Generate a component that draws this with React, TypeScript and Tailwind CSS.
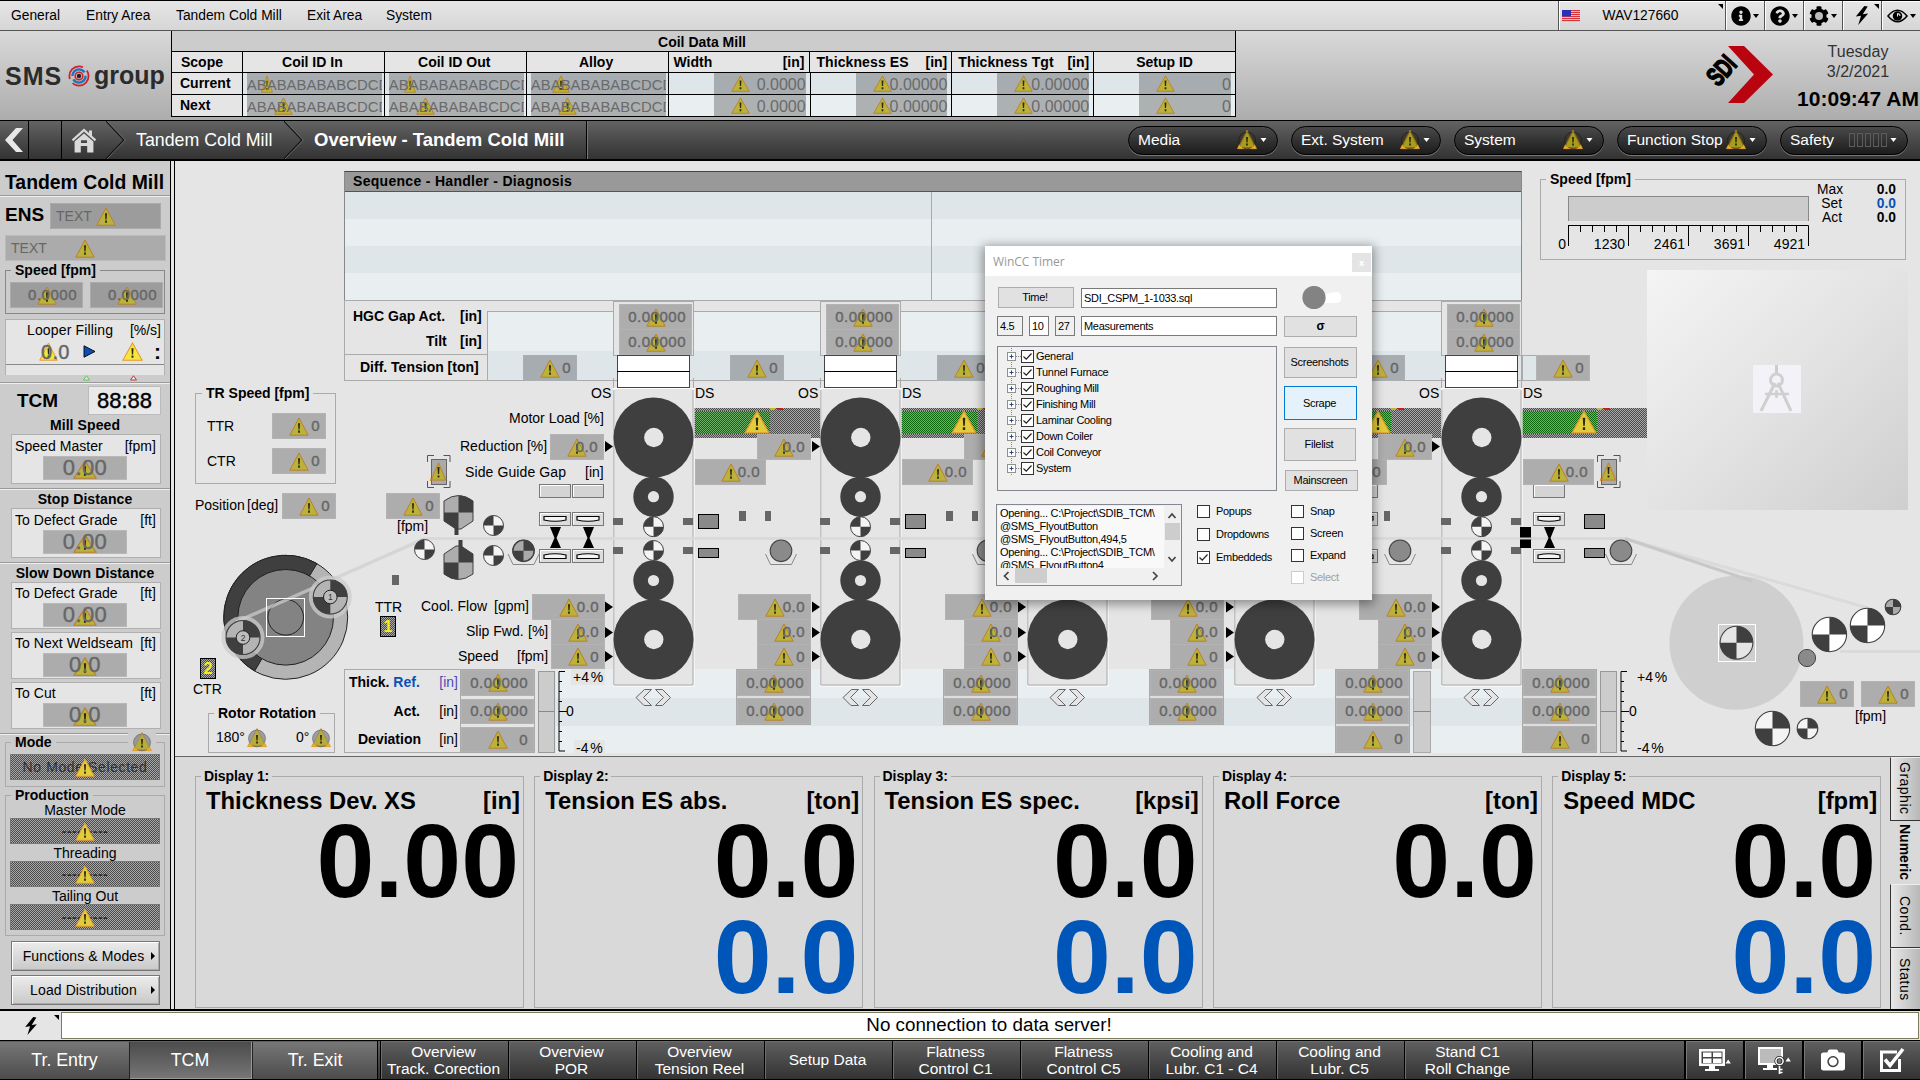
import React from "react";
import { FaInfoCircle, FaQuestionCircle, FaCog, FaCamera } from "react-icons/fa";

/* ---------- small drawing pieces ---------- */

function Warn({ className = "h-[19px] w-[20px]", tone = "dim" }: { className?: string; tone?: "dim" | "bright" | "gold" }) {
  const fill = tone === "dim" ? "#bcb23a" : tone === "bright" ? "#f7e640" : "#e3cc3c";
  const stroke = tone === "dim" ? "#b9802f" : "#e39a2c";
  return (
    <svg viewBox="0 0 20 19" preserveAspectRatio="none" className={`block shrink-0 ${className}`}>
      <path d="M10 1 L19.2 18.2 H0.8 Z" fill={fill} stroke={stroke} strokeWidth="1" />
      <path d="M9 6.2h2l-.4 6.2h-1.2zM9.1 13.6h1.8v2.2H9.1z" fill="#2c2a10" />
    </svg>
  );
}

function WarnRound({ dark = false }: { dark?: boolean }) {
  return (
    <svg viewBox="0 0 20 20" className="block h-[20px] w-[20px] shrink-0">
      <path d="M10 0.5 L19.4 18.6 H0.6 Z" fill="#f2b51d" stroke="#e39a2c" />
      <circle cx="10" cy="10.4" r="8.4" fill={dark ? "#3a3a20" : "#8c8c8c"} opacity={dark ? 0.55 : 0.8} stroke={dark ? "#111" : "#666"} />
      <path d="M10 2 L17.6 17 H2.4 Z" fill={dark ? "#a89c1c" : "#b7ad36"} />
      <path d="M9 7h2l-.4 5.4h-1.2zM9.1 13.6h1.8v2H9.1z" fill="#2c2a10" />
    </svg>
  );
}

function Field({
  className = "",
  value,
  tone = "plain",
}: {
  className?: string;
  value: string;
  tone?: "plain" | "blue" | "dark";
}) {
  const bg =
    tone === "blue" ? "bg-[#a7acb0] border-[#a9afb3]" : tone === "dark" ? "bg-[#9c9c9c] border-[#acacac]" : "bg-[#adadad] border-[#b3b3b3]";
  return (
    <div className={`flex items-center justify-center border ${bg} ${className}`}>
      <div className="relative flex h-full w-full items-center justify-end pb-px pr-[5px]">
        <div className="absolute inset-0 flex items-center justify-center">
          <Warn />
        </div>
        <span className="relative text-[15px] leading-none tracking-[0.5px] text-[#666] [-webkit-text-stroke:0.4px_#666]">{value}</span>
      </div>
    </div>
  );
}

const dither = "bg-[repeating-conic-gradient(#4c4c4c_0_25%,#a8a8a8_0_50%)] bg-[length:2px_2px]";

/* ---------- header ---------- */

function Caret({ className = "" }: { className?: string }) {
  return (
    <svg viewBox="0 0 6 4" className={`h-[4px] w-[6px] ${className}`}>
      <path d="M0 0h6L3 4z" fill="currentColor" />
    </svg>
  );
}

function Corner() {
  return (
    <svg viewBox="0 0 5 5" className="absolute right-[2px] top-[3px] h-[5px] w-[5px]">
      <path d="M0 0h5v5z" fill="#000" />
    </svg>
  );
}

function MenuBar() {
  const cell = "relative flex h-full items-center justify-center border-l border-[#555] shadow-[inset_1px_1px_0_#fff]";
  return (
    <div className="flex h-[31px] border-b border-t border-b-[#555] border-t-black bg-linear-to-b from-[#e6e6e6] to-[#d6d6d6] text-[13.8px]">
      <div className="flex flex-1 items-center pl-[11px] pt-px">
        <span className="w-[75px]">General</span>
        <span className="w-[90px]">Entry Area</span>
        <span className="w-[131px]">Tandem Cold Mill</span>
        <span className="w-[79px]">Exit Area</span>
        <span>System</span>
      </div>
      <div className={`${cell} w-[167px] pr-[3px]`}>
        <svg viewBox="0 0 18 12" className="absolute left-[3px] top-[9px] h-[12px] w-[18px]">
          <rect width="18" height="12" fill="#f3c9cb" />
          {[0, 2, 4, 6, 8, 10].map((y) => (
            <rect key={y} y={y} width="18" height="1.1" fill="#d8343c" />
          ))}
          <rect width="9" height="6.4" fill="#2a2fb8" />
        </svg>
        <span className="pt-px">WAV127660</span>
        <Corner />
      </div>
      <div className={`${cell} w-[39px] gap-[2px]`}>
        <FaInfoCircle className="size-[20px]" />
        <Caret />
      </div>
      <div className={`${cell} w-[39px] gap-[2px]`}>
        <FaQuestionCircle className="size-[20px]" />
        <Caret />
      </div>
      <div className={`${cell} w-[39px] gap-[2px]`}>
        <span className="relative">
          <FaCog className="size-[20px]" />
          <span className="absolute left-[6px] top-[6px] size-[8px] rounded-full bg-[#bbb]" />
        </span>
        <Caret />
      </div>
      <div className={`${cell} w-[39px]`}>
        <svg viewBox="0 0 14 20" className="h-[19px] w-[14px]">
          <path d="M9.5 0 L0.5 11 L6 10.2 L3 20 L13.5 8 L7.8 8.8 L13 0.5 Z" fill="#000" />
        </svg>
        <Corner />
      </div>
      <div className={`${cell} w-[39px] gap-[2px]`}>
        <svg viewBox="0 0 22 14" className="h-[14px] w-[21px]">
          <path d="M1 7 Q11 -5 21 7 Q11 19 1 7Z" fill="none" stroke="#000" strokeWidth="1.6" />
          <circle cx="11" cy="7" r="5" fill="#000" />
          <path d="M11 4v3.5M11 4.5a2.6 2.6 0 0 1 2.6 2.6" stroke="#e0e0e0" strokeWidth="1.1" fill="none" />
        </svg>
        <Caret />
      </div>
    </div>
  );
}

const headCell = "flex items-center border-l border-black bg-[#e5e5e5] font-bold";

function CoilText({ tri, w, blue }: { tri: string; w: string; blue: boolean }) {
  return (
    <div className={`h-full w-[142px] border-l border-black pl-[4px] pr-[2px] ${blue ? "bg-[#dfe6e9]" : "bg-[#e9eef0]"}`}>
      <div className={`relative h-full overflow-hidden ${blue ? "bg-[#a7acb0]" : "bg-[#aeb1b2]"}`}>
        <div className={`absolute top-[2px] ${tri}`}>
          <Warn className={`h-[18px] ${w}`} />
        </div>
        <span className="relative text-[14.9px] leading-[21px] text-[#6a6a6a]">ABABABABABCDCD</span>
      </div>
    </div>
  );
}

function CoilNum({ value, blue, tri }: { value: string; blue: boolean; tri: string }) {
  return (
    <div className={`h-full w-[142px] border-l border-black pl-[45px] pr-[4px] ${blue ? "bg-[#dfe6e9]" : "bg-[#e9eef0]"}`}>
      <div className={`relative h-full text-right ${blue ? "bg-[#a7acb0]" : "bg-[#aeb1b2]"}`}>
        <div className={`absolute top-[2px] ${tri}`}>
          <Warn className="h-[17px] w-[19px]" />
        </div>
        <span className="relative text-[16px] leading-[21px] text-[#6a6a6a]">{value}</span>
      </div>
    </div>
  );
}

function CoilRow({ name, blue }: { name: string; blue: boolean }) {
  return (
    <div className="flex h-[22px] border-b border-black">
      <div className="flex w-[70px] items-center bg-[#e5e5e5] pl-[8px] text-[14px] font-bold">{name}</div>
      <CoilText blue={blue} tri={blue ? "left-[14px]" : "left-[27px]"} w={blue ? "w-[12px]" : "w-[19px]"} />
      <CoilText blue={blue} tri={blue ? "left-[15px]" : "left-[27px]"} w={blue ? "w-[12px]" : "w-[19px]"} />
      <CoilText blue={blue} tri={blue ? "left-[21px]" : "left-[27px]"} w={blue ? "w-[18px]" : "w-[19px]"} />
      <CoilNum blue={blue} value="0.0000" tri="left-[17px]" />
      <CoilNum blue={blue} value="0.00000" tri="left-[17px]" />
      <CoilNum blue={blue} value="0.00000" tri="left-[17px]" />
      <CoilNum blue={blue} value="0" tri="left-[17px]" />
    </div>
  );
}

function Header() {
  return (
    <div className="flex h-[89px] bg-linear-to-b from-[#d9d9d9] to-[#adadad]">
      <div className="flex w-[171px] items-center pl-[5px]">
        <span className="mt-px w-[60px] text-[25px] leading-none font-bold tracking-[1px] text-[#2b2b2b]">SMS</span>
        <svg viewBox="0 0 22 22" className="ml-[3px] h-[22px] w-[22px]">
          <circle cx="11" cy="11" r="9.6" fill="none" stroke="#d0202c" strokeWidth="1.8" strokeDasharray="22 5" />
          <circle cx="11" cy="11" r="6.6" fill="none" stroke="#1b76bd" strokeWidth="2.4" strokeDasharray="17 3.5" />
          <circle cx="11" cy="11" r="3.8" fill="none" stroke="#d0202c" strokeWidth="1.6" />
          <circle cx="11" cy="11" r="2.2" fill="#222" />
        </svg>
        <span className="ml-[4px] text-[25px] leading-none font-bold text-[#2b2b2b]">group</span>
      </div>
      <div className="flex h-[86px] w-[1065px] flex-col border-l border-r border-black bg-[#cccccc]">
        <div className="h-[22px] border-b border-black pt-[2px] pr-[3px] text-center text-[14px] leading-[18px] font-bold">Coil Data Mill</div>
        <div className="flex h-[21px] border-b border-black text-[14px]">
          <div className="flex w-[70px] items-center bg-[#e5e5e5] pl-[9px] font-bold">Scope</div>
          <div className={`${headCell} w-[142px] justify-center pr-[2px]`}>Coil ID In</div>
          <div className={`${headCell} w-[142px] justify-center pr-[2px]`}>Coil ID Out</div>
          <div className={`${headCell} w-[142px] justify-center pr-[2px]`}>Alloy</div>
          <div className={`${headCell} w-[142px] justify-between px-[5px]`}>
            <span>Width</span>
            <span>[in]</span>
          </div>
          <div className={`${headCell} w-[142px] justify-between pl-[6px] pr-[4px]`}>
            <span className="tracking-[0.1px]">Thickness ES</span>
            <span>[in]</span>
          </div>
          <div className={`${headCell} w-[142px] justify-between pl-[6px] pr-[4px]`}>
            <span className="tracking-[0.1px]">Thickness Tgt</span>
            <span>[in]</span>
          </div>
          <div className={`${headCell} w-[142px] justify-center`}>Setup ID</div>
        </div>
        <CoilRow name="Current" blue />
        <CoilRow name="Next" blue={false} />
      </div>
      <div className="flex flex-1 justify-end">
        <svg viewBox="0 0 74 64" className="mr-[22px] mt-[12px] h-[64px] w-[74px]">
          <path d="M28 3 H44 L73 31.5 L44 60 H28 L54 31.5 Z" fill="#b9040f" />
          <text
            x="0"
            y="10.500"
            textAnchor="middle"
            transform="translate(21 27) rotate(-48) scale(0.62 0.92)"
            fontFamily="Liberation Sans, sans-serif"
            fontWeight="700"
            fontSize="29"
            stroke="#000"
            strokeWidth="1.6"
          >
            SDI
          </text>
        </svg>
        <div className="flex w-[124px] flex-col items-center text-[#333]">
          <span className="mt-[11px] text-[16px] leading-[20px]">Tuesday</span>
          <span className="text-[16px] leading-[20px]">3/2/2021</span>
          <span className="mt-[4px] text-[21px] leading-[26px] font-bold whitespace-nowrap text-black">10:09:47 AM</span>
        </div>
      </div>
    </div>
  );
}

function Pill({ label, icon, w }: { label: string; icon: React.ReactNode; w: string }) {
  return (
    <div
      className={`flex h-[29px] items-center rounded-full border border-black bg-linear-to-b from-[#4a4a4a] to-[#1c1c1c] pl-[9px] pr-[10px] text-[15.5px] text-white shadow-[0_1px_0_#777] ${w}`}
    >
      <span className="flex-1 whitespace-nowrap">{label}</span>
      {icon}
      <Caret className="ml-[3px] !h-[4px] !w-[7px]" />
    </div>
  );
}

function Breadcrumb() {
  return (
    <div className="flex h-[41px] items-center border-b-2 border-t border-black bg-linear-to-b from-[#636363] to-[#333] text-white">
      <div className="flex h-full w-[29px] items-center border-r border-black pl-[4px]">
        <svg viewBox="0 0 19 24" className="h-[24px] w-[19px]">
          <path d="M12 0h7L8.5 12 19 24h-7L1 12z" fill="#e8e8e8" />
        </svg>
      </div>
      <div className="h-full w-[33px] border-r border-black" />
      <svg viewBox="0 0 26 25" className="ml-[9px] h-[25px] w-[26px]">
        <path d="M13 0.5 L0.8 11.5 L2.2 13.2 L13 3.6 L23.8 13.2 L25.2 11.5 L21 7.8V2.5H18v2.6z" fill="#d9d9d9" />
        <path d="M13 5.4 L3.6 13.6V24.5h6.2v-6.4h6.4v6.4h6.2V13.6zM10 12.2h6v2.8h-6z" fill="#d9d9d9" fillRule="evenodd" />
      </svg>
      <svg viewBox="0 0 20 38" className="ml-[9px] h-[38px] w-[20px]">
        <path d="M0 0 L18 19 L0 38" fill="none" stroke="#111" strokeWidth="1.5" />
        <path d="M1 0 L19.2 19 L1 38" fill="none" stroke="#888" strokeWidth="0.7" />
      </svg>
      <span className="ml-[10px] w-[148px] text-[17.8px] whitespace-nowrap">Tandem Cold Mill</span>
      <svg viewBox="0 0 20 38" className="h-[38px] w-[20px]">
        <path d="M0 0 L18 19 L0 38" fill="none" stroke="#111" strokeWidth="1.5" />
        <path d="M1 0 L19.2 19 L1 38" fill="none" stroke="#888" strokeWidth="0.7" />
      </svg>
      <span className="ml-[10px] w-[272px] text-[18.500px] font-bold whitespace-nowrap">Overview - Tandem Cold Mill</span>
      <div className="h-full w-px bg-black shadow-[1px_0_0_#777]" />
      <div className="ml-auto flex gap-[13px] pr-[12px]">
        <Pill label="Media" w="w-[150px]" icon={<WarnRound dark />} />
        <Pill label="Ext. System" w="w-[150px]" icon={<WarnRound dark />} />
        <Pill label="System" w="w-[150px]" icon={<WarnRound dark />} />
        <Pill label="Function Stop" w="w-[150px]" icon={<WarnRound dark />} />
        <Pill
          label="Safety"
          w="w-[128px]"
          icon={
            <div className="flex gap-[2px]">
              {[0, 1, 2, 3, 4].map((i) => (
                <span key={i} className="h-[14px] w-[6px] border border-[#5c5c5c]" />
              ))}
            </div>
          }
        />
      </div>
    </div>
  );
}

/* ---------- left panel ---------- */

function Rule() {
  return <div className="h-[2px] shrink-0 border-t border-[#999] bg-[#f0f0f0]" />;
}

function Readout({ label, unit, value, tall = false }: { label: string; unit: string; value: string; tall?: boolean }) {
  return (
    <div className={`ml-[11px] w-[150px] shrink-0 border border-[#b0b0b0] bg-[#e5e5e5] ${tall ? "h-[50px] pt-px" : "h-[47px]"}`}>
      <div className="flex h-[20px] items-center justify-between pl-[3px] pr-[4px] text-[14px] tracking-[0.05px]">
        <span>{label}</span>
        <span>{unit}</span>
      </div>
      <div className="relative ml-[31px] flex h-[24px] w-[84px] items-center justify-center border border-[#b8b8b8] bg-[#acacac]">
        <div className="absolute inset-0 flex items-end justify-center">
          <Warn className="h-[19px] w-[24px]" />
        </div>
        <span className="relative text-[22px] leading-none tracking-[0.4px] text-[#666] [-webkit-text-stroke:0.4px_#666]">{value}</span>
      </div>
    </div>
  );
}

function DitherField({ text, bold = false }: { text: string; bold?: boolean }) {
  return (
    <div className={`relative ml-[4px] flex h-[26px] w-[150px] items-center justify-center border border-[#777] ${dither}`}>
      <span className={`text-[14px] text-[#2f2f2f] ${bold ? "tracking-[0.6px]" : "font-bold tracking-[0.5px]"}`}>{text}</span>
      <div className="absolute inset-0 flex items-center justify-center">
        <Warn tone="gold" />
      </div>
    </div>
  );
}

function SideButton({ children, className }: { children: string; className: string }) {
  return (
    <button
      className={`ml-[11px] flex h-[30px] w-[149px] shrink-0 items-center border border-[#777] bg-linear-to-b from-[#ececec] to-[#c9c9c9] text-[14px] tracking-[0.1px] shadow-[inset_1px_1px_0_#fff,inset_-1px_-1px_0_#aaa] ${className}`}
    >
      <span className="flex-1 text-center whitespace-nowrap">{children}</span>
      <svg viewBox="0 0 4 8" className="mr-[4px] h-[8px] w-[4px]">
        <path d="M0 0l4 4-4 4z" />
      </svg>
    </button>
  );
}

function Sidebar() {
  return (
    <div className="flex w-[175px] shrink-0 border-r border-black bg-[#e5e5e5]">
      <div className="flex w-[171px] flex-col border-r border-black bg-[#cccccc]">
        <div className="flex h-[34px] shrink-0 items-center justify-center pt-[9px] pr-[1px] text-[19.4px] font-bold whitespace-nowrap">
          Tandem Cold Mill
        </div>
        <Rule />
        <div className="mt-[6px] flex h-[26px] shrink-0 items-center pl-[5px]">
          <span className="w-[45px] pb-[3px] text-[19px] leading-none font-bold">ENS</span>
          <div className="relative flex h-[26px] w-[111px] items-center border border-[#aaa] bg-[#9c9c9c] pl-[5px] text-[14px] text-[#666]">
            TEXT
            <div className="absolute inset-0 flex items-center justify-center">
              <Warn />
            </div>
          </div>
        </div>
        <div className="relative ml-[5px] mt-[6px] flex h-[26px] w-[161px] shrink-0 items-center border border-[#bbb] bg-[#ababab] pl-[5px] text-[14px] text-[#666]">
          TEXT
          <div className="absolute inset-0 flex items-center justify-center pr-px">
            <Warn />
          </div>
        </div>
        <fieldset className="ml-[5px] mt-px h-[52px] w-[160px] shrink-0 border border-[#888]">
          <legend className="ml-[5px] px-[4px] text-[14px] leading-[16px] font-bold">Speed [fpm]</legend>
          <div className="mt-[4px] flex gap-[7px] pl-[4px]">
            <Field tone="dark" value="0.0000" className="h-[26px] w-[73px]" />
            <Field tone="dark" value="0.0000" className="h-[26px] w-[73px]" />
          </div>
        </fieldset>
        <div className="ml-[5px] mt-[5px] h-[56px] w-[160px] shrink-0 border border-b-0 border-[#b0b0b0] bg-[#e5e5e5]">
          <div className="flex h-[21px] items-center justify-between pl-[21px] pr-[3px] text-[14px]">
            <span className="tracking-[0.15px]">Looper Filling</span>
            <span>[%/s]</span>
          </div>
          <div className="flex h-[24px] items-center border-b border-[#888] pb-[2px]">
            <div className="relative ml-[33px] flex h-[20px] w-[34px] items-center">
              <Warn tone="bright" className="absolute left-0 h-[19px] w-[19px]" />
              <span className="relative ml-[2px] text-[20px] leading-none tracking-[0.3px] text-[#666] [-webkit-text-stroke:0.4px_#666]">0.0</span>
            </div>
            <svg viewBox="0 0 13 13" className="ml-[10px] h-[13px] w-[13px]">
              <path d="M1 0.8 L12 6.5 L1 12.2Z" fill="#0a50b4" stroke="#000" strokeWidth="0.9" />
            </svg>
            <Warn tone="bright" className="ml-[26px] h-[19px] w-[21px]" />
            <span className="ml-[11px] text-[21px] leading-none font-bold">:</span>
          </div>
        </div>
        <div className="flex h-[7px] shrink-0 pl-[83px]">
          <svg viewBox="0 0 54 6" className="h-[6px] w-[54px]">
            <path d="M0.5 5 L3.5 0.8 L6.5 5Z" fill="#e8e8e8" stroke="#5fc552" />
            <path d="M47.5 5 L50.5 0.8 L53.5 5Z" fill="#e8e8e8" stroke="#d23030" />
          </svg>
        </div>
        <Rule />
        <div className="mt-[2px] flex h-[29px] shrink-0 items-center pl-[17px]">
          <span className="w-[71px] text-[19px] leading-none font-bold">TCM</span>
          <div className="flex h-[29px] w-[73px] items-center justify-center border border-[#bbb] bg-[#e9e9e9] text-[22px] leading-none [-webkit-text-stroke:0.4px_#000]">
            88:88
          </div>
        </div>
        <div className="mt-[2px] h-[17px] shrink-0 pt-px text-center text-[14px] leading-[15px] font-bold tracking-[0.1px]">Mill Speed</div>
        <Readout label="Speed Master" unit="[fpm]" value="0.00" tall />
        <div className="h-[4px] shrink-0" />
        <Rule />
        <div className="h-[18px] shrink-0 pt-[2px] text-center text-[14px] leading-[14px] font-bold tracking-[0.1px]">Stop Distance</div>
        <Readout label="To Defect Grade" unit="[ft]" value="0.00" tall />
        <div className="h-[4px] shrink-0" />
        <Rule />
        <div className="h-[18px] shrink-0 pt-[2px] text-center text-[14px] leading-[14px] font-bold tracking-[0.1px]">Slow Down Distance</div>
        <Readout label="To Defect Grade" unit="[ft]" value="0.00" />
        <div className="h-[3px] shrink-0" />
        <Readout label="To Next Weldseam" unit="[ft]" value="0.0" />
        <div className="h-[3px] shrink-0" />
        <Readout label="To Cut" unit="[ft]" value="0.0" />
        <div className="h-[4px] shrink-0" />
        <Rule />
        <fieldset className="relative -mt-px ml-[5px] h-[53px] w-[160px] shrink-0 border border-[#aaa]">
          <legend className="ml-[5px] px-[4px] text-[14px] leading-[16px] font-bold">Mode</legend>
          <div className="absolute -top-[18px] right-[8px] bg-[#ccc] px-[4px]">
            <WarnRound />
          </div>
          <div className="mt-[4px]">
            <DitherField text="No Mode Selected" bold />
          </div>
        </fieldset>
        <fieldset className="ml-[5px] h-[149px] w-[160px] shrink-0 border border-[#aaa] text-center text-[14px]">
          <legend className="ml-[5px] px-[4px] text-left leading-[16px] font-bold">Production</legend>
          <div className="h-[15px] leading-[14px]">Master Mode</div>
          <DitherField text="---------" />
          <div className="h-[17px] leading-[18px]">Threading</div>
          <DitherField text="---------" />
          <div className="h-[17px] leading-[18px]">Tailing Out</div>
          <DitherField text="---------" />
        </fieldset>
        <SideButton className="mt-[5px] pl-[4px]">{"Functions & Modes"}</SideButton>
        <SideButton className="mt-[4px] pl-[4px]">Load Distribution</SideButton>
      </div>
    </div>
  );
}

/* ---------- process picture ---------- */

function Roll({ cx, cy, r, light = "#fff", dark = "#3f3f3f" }: { cx: number; cy: number; r: number; light?: string; dark?: string }) {
  return (
    <g>
      <circle cx={cx} cy={cy} r={r} fill={light} />
      <path d={`M${cx} ${cy}V${cy - r}A${r} ${r} 0 0 1 ${cx + r} ${cy}ZM${cx} ${cy}V${cy + r}A${r} ${r} 0 0 1 ${cx - r} ${cy}Z`} fill={dark} />
      <circle cx={cx} cy={cy} r={r} fill="none" stroke="#3f3f3f" strokeWidth="1.1" />
    </g>
  );
}

function WorkRoll({ cx, cy }: { cx: number; cy: number }) {
  const r = 10;
  return (
    <g>
      <circle cx={cx} cy={cy} r={r} fill="#f4f4f4" />
      <path d={`M${cx} ${cy}V${cy - r}A${r} ${r} 0 0 0 ${cx - r} ${cy}ZM${cx} ${cy}V${cy + r}A${r} ${r} 0 0 0 ${cx + r} ${cy}Z`} fill="#3f3f3f" />
      <circle cx={cx} cy={cy} r={r} fill="none" stroke="#3f3f3f" strokeWidth="1" />
    </g>
  );
}

function StandDrawing({ x }: { x: number }) {
  return (
    <g transform={`translate(${x} 0)`}>
      <rect x="0.5" y="301.5" width="80" height="54" fill="#e5e5e5" stroke="#aaa" />
      <rect x="4.5" y="355.5" width="72" height="32" fill="#fff" stroke="#444" />
      <path d="M4 371.5h73" stroke="#000" />
      <path d="M0.5 378v11M80.5 378v11" stroke="#aaa" />
      <rect x="0.5" y="388.5" width="80.5" height="297.5" fill="#e5e5e5" stroke="#fff" />
      <path d="M80 390v295H0.8V390" fill="none" stroke="#aaa" />
      {[437.5, 639.5].map((cy) => (
        <g key={cy}>
          <circle cx="40.5" cy={cy} r="40" fill="#3f3f3f" />
          <circle cx="40.8" cy={cy} r="9.7" fill="#e5e5e5" />
        </g>
      ))}
      {[496.7, 580.5].map((cy) => (
        <g key={cy}>
          <circle cx="40.5" cy={cy} r="20.2" fill="#3f3f3f" />
          <circle cx="40.5" cy={cy} r="5.6" fill="#e5e5e5" />
        </g>
      ))}
      <WorkRoll cx={40.5} cy={526.7} />
      <WorkRoll cx={40.5} cy={550.5} />
      <path d="M0 518h10v7H0zM0 547h10v7H0zM70 518h10v7H70zM70 547h10v7H70z" fill="#666" />
      <g fill="#e5e5e5" stroke="#666" strokeWidth="1">
        <path d="M38.5 689.5h-7L23 697.5l8 8h7.500l-8-8z" />
        <path d="M42.500 689.5h7l8 8-8 8h-7l8-8z" />
      </g>
    </g>
  );
}

function Looper({ cx, fill = "#8a8a8a" }: { cx: number; fill?: string }) {
  return (
    <g>
      <path d={`M${cx - 15.5} 554l5 10.500h21l5-10.500`} fill="none" stroke="#888" />
      <circle cx={cx} cy="550.800" r="10.800" fill={fill} stroke="#444" strokeWidth="1.100" />
    </g>
  );
}

function GuideButtons({ x }: { x: number }) {
  return (
    <g transform={`translate(${x} 0)`}>
      {[484.5, 512.5, 549.5].map((y, i) => (
        <g key={y}>
          <rect x="0.500" y={y} width="31" height="13" fill={i === 0 ? "#d4d4d4" : "#dcdcdc"} stroke="#777" />
          <path d={`M1.500 ${y + 12}V${y + 1}H30.500`} fill="none" stroke="#fff" />
          {i === 1 && <path d={`M5 ${y + 4}h22v3.500q-11 2.500-22 0z`} fill="#f4f4f4" stroke="#000" strokeWidth="1.200" />}
          {i === 2 && <path d={`M5 ${y + 9}h22v-3.500q-11-2.500-22 0z`} fill="#f4f4f4" stroke="#000" strokeWidth="1.200" />}
        </g>
      ))}
      <path d="M11 527h11l-4.500 11 4.500 10H11l4.500-10z" fill="#000" />
    </g>
  );
}

function GapDrawing({ x }: { x: number }) {
  return (
    <g transform={`translate(${x} 0)`}>
      <rect x="85.500" y="514.500" width="20" height="14" fill="#8a8a8a" stroke="#000" />
      <rect x="85.500" y="548.500" width="20" height="9" fill="#8a8a8a" stroke="#000" />
      <path d="M126 511h7v10h-7zM152 511h6v10h-6z" fill="#666" />
      <Looper cx={168} />
    </g>
  );
}

function Bracket({ x }: { x: number }) {
  return (
    <g transform={`translate(${x} 455)`}>
      <path d="M0.500 7V0.500H7M16.500 0.500H23V7M23 26v6.500H16.500M7 32.500H0.500V26" fill="none" stroke="#555" />
      <path d="M11.500 7L20 25.500H3Z" fill="#f2b51d" stroke="#e39a2c" />
      <rect x="4.500" y="4.500" width="15" height="25" fill="#a0a0a0" fillOpacity="0.85" stroke="#666" />
      <path d="M11.500 8L18.500 25H4.500Z" fill="#bcb23a" stroke="#c0862f" />
      <path d="M10.500 12h2l-.4 7h-1.200zM10.600 20.500h1.800v2h-1.800z" fill="#222" />
    </g>
  );
}

function Drawing() {
  const stands = [613, 820, 1027, 1234, 1441];
  return (
    <svg viewBox="175 161 1745 596" className="absolute left-[175px] top-[161px] h-[596px] w-[1745px]">
      {/* payoff rotor */}
      <circle cx="285.700" cy="617.300" r="62" fill="#b4b4b4" stroke="#222" />
      <path d="M317 563.600A62 62 0 1 0 254.700 671L262 658.500A47.500 47.500 0 0 1 309.500 576Z" fill="#3f3f3f" stroke="#222" />
      <circle cx="285.700" cy="617.300" r="47.800" fill="#838383" stroke="#222" />
      <circle cx="285.700" cy="617.300" r="17.800" fill="#838383" stroke="#222" />
      <path d="M236 622 L425 538.500" stroke="#cfcfcf" strokeOpacity="0.7" strokeWidth="3.500" />
      <rect x="266.500" y="598.500" width="38" height="38" fill="none" stroke="#fff" />
      {[
        [330.3, 597, "1"],
        [243, 637.5, "2"],
      ].map(([cx, cy, n]) => (
        <g key={n}>
          <circle cx={cx} cy={cy} r="19.500" fill="none" stroke="#ccc" strokeOpacity="0.75" strokeWidth="4" />
          <Roll cx={cx as number} cy={cy as number} r={17} light="#b4b4b4" />
          <circle cx={cx} cy={cy} r="6.800" fill="#bdbdbd" stroke="#222" />
          <text x={cx} y={(cy as number) + 3} textAnchor="middle" fontSize="8.500" fill="#333">
            {n}
          </text>
        </g>
      ))}
      {/* strip */}
      <path d="M424 538.500H1626" stroke="#d9d9d9" strokeWidth="3" />
      {/* entry rolls */}
      <g>
        <path d="M444 501q14.500-11 29 0v20l-12 8h-5l-12-8z" fill="#adadad" />
        <path d="M458.500 495.500q8 0 14.500 5.500v11.500h-14.500zM458.500 512.500H444V521l10.500 7v7h4z" fill="#3f3f3f" />
        <path d="M444 501q14.500-11 29 0v20l-12 8h-5l-12-8z" fill="none" stroke="#3f3f3f" />
        <path d="M444 554l12-8h5l12 8v20q-14.500 11-29 0z" fill="#adadad" />
        <path d="M458.500 546v-6h4v7L473 554v8.500h-14.500zM458.500 562.500H444V574q6.500 5.500 14.500 5.500z" fill="#3f3f3f" />
        <path d="M444 554l12-8h5l12 8v20q-14.500 11-29 0z" fill="none" stroke="#3f3f3f" />
      </g>
      <WorkRoll cx={493.5} cy={525.5} />
      <WorkRoll cx={424.5} cy={549.5} />
      <WorkRoll cx={493.5} cy={555.5} />
      <Looper cx={523.5} fill="#a9a9a9" />
      <Roll cx={523.5} cy={550.8} r={10.5} light="#a9a9a9" />
      <rect x="392" y="575" width="7" height="10" fill="#666" />
      <Bracket x={427} />
      <GuideButtons x={539} />
      <GuideButtons x={572} />
      {stands.map((x) => (
        <StandDrawing key={x} x={x} />
      ))}
      <path d="M613 538.500H1526" stroke="#dadada" strokeWidth="2.600" />
      <GapDrawing x={613} />
      <GapDrawing x={820} />
      <GapDrawing x={1027} />
      <GapDrawing x={1232} />
      <GuideButtons x={1346} />
      {/* exit side of the last stand */}
      <GuideButtons x={1533} />
      <rect x="1584.500" y="514.500" width="20" height="14" fill="#8a8a8a" stroke="#000" />
      <rect x="1584.500" y="548.500" width="20" height="9" fill="#8a8a8a" stroke="#000" />
      <Looper cx={1621} />
      <Bracket x={1597} />
      <rect x="1520" y="527" width="11" height="21" fill="#000" />
      <path d="M1520 538.500h12" stroke="#ccc" strokeWidth="2" />
      {/* delivery side */}
      <path d="M1625 538.500L1868 608" stroke="#dadada" strokeWidth="3" />
      <path d="M1840 651.500H1920" stroke="#dadada" strokeWidth="3" />
      <circle cx="1736.400" cy="642.700" r="67" fill="#cfcfcf" />
      <path d="M1625 538.500L1752 581" stroke="#c8c8c8" strokeWidth="3" />
      <rect x="1718.500" y="624.500" width="37" height="37" fill="none" stroke="#fff" />
      <Roll cx={1736.5} cy={642.7} r={16.4} light="#e5e5e5" />
      <Roll cx={1829.4} cy={634.5} r={17.2} />
      <Roll cx={1867.5} cy={625.5} r={17.2} />
      <Roll cx={1893} cy={607} r={7.8} light="#aaa" />
      <circle cx="1807" cy="658" r="8.600" fill="#8a8a8a" stroke="#444" />
      <Roll cx={1772.5} cy={728.5} r={17.2} light="#f4f4f4" />
      <Roll cx={1807.5} cy={728.5} r={10.3} light="#f4f4f4" />
      {/* speed scale */}
      <path d="M1568.500 246V225.500H1808.500V246M1628.500 225v21M1688.500 225v21M1748.500 225v21" fill="none" stroke="#000" />
      {Array.from({ length: 20 }, (_, i) => (
        <path key={i} d={`M${1568.5 + i * 12} 225v7`} stroke="#000" />
      ))}
      {/* deviation bars and scales */}
      {[538, 1600].map((x) => (
        <g key={x} transform={`translate(${x} 0)`}>
          <rect x="0.500" y="671.500" width="16" height="81" fill="#ccc" stroke="#999" />
          <path d="M0.500 711.500h16" stroke="#888" />
          <path d="M27 671.500h-6v79.500h6M21 711.500h8" fill="none" stroke="#000" />
          {[1, 2, 3, 5, 6, 7].map((i) => (
            <path key={i} d={`M21 ${671.5 + i * 10}h3`} stroke="#000" />
          ))}
        </g>
      ))}
      <g>
        <rect x="1413.500" y="671.500" width="17" height="81" fill="#ccc" stroke="#aaa" />
        <path d="M1413.500 711.500h17" stroke="#888" />
      </g>
      {/* flow arrows */}
      {[605, 812, 1018, 1226, 1432].map((x) => (
        <path
          key={x}
          d={`M${x} 441l8 5.500-8 5.500zM${x} 601.500l8 5.500-8 5.500zM${x} 627l8 5.500-8 5.500zM${x} 651l8 5.500-8 5.500z`}
          fill="#000"
        />
      ))}
    </svg>
  );
}

function LoadBar({ className }: { className: string }) {
  return (
    <div className={`absolute top-[408px] h-[30px] w-[131px] ${dither} ${className}`}>
      <div className="ml-[6px] mt-[3px] h-[23px] w-[75px] bg-[repeating-conic-gradient(#0f6a0f_0_25%,#6fb069_0_50%)] bg-[length:2px_2px]" />
      <div className="absolute left-[81px] top-0 h-[2px] w-[5px] bg-[#c8b820]" />
      <div className="absolute left-[88px] top-0 h-[2px] w-[6px] bg-[#c02020]" />
      <div className="absolute left-[55px] top-[2px]">
        <Warn tone="gold" className="h-[24px] w-[26px]" />
      </div>
    </div>
  );
}

const gaps = [
  { id: 1, pos: "left-[613px]", rows: 2, out: true },
  { id: 2, pos: "left-[820px]", rows: 2, out: true },
  { id: 3, pos: "left-[1026px]", rows: 2, out: true },
  { id: 4, pos: "left-[1234px]", rows: 3, out: true },
  { id: 5, pos: "left-[1441px]", rows: 3, out: false },
];

function GapFields() {
  return (
    <>
      {gaps.map((g) => (
        <div key={g.id} className={`absolute top-0 ${g.pos}`}>
          <Field value="0.00000" className="absolute left-[6px] top-[304px] h-[26px] w-[73px]" />
          <Field value="0.00000" className="absolute left-[6px] top-[329px] h-[26px] w-[73px]" />
          <Field tone={g.out ? "blue" : "plain"} value="0" className={`absolute top-[355px] h-[26px] w-[54px] ${g.out ? "left-[117px]" : "left-[95px]"}`} />
          <span className="absolute left-[82px] top-[385px] text-[14px] leading-[16px]">DS</span>
          <span className="absolute -left-[22px] top-[385px] text-[14px] leading-[16px]">OS</span>
          <div className="absolute left-[82px] top-0">
            <Field value="0.0" className="absolute left-0 top-[459px] h-[26px] w-[71px]" />
          </div>
          {g.out && (
            <>
              <Field value="0.0" className="absolute left-[144px] top-[434px] h-[26px] w-[54px]" />
              <Field value="0.0" className="absolute left-[125px] top-[594px] h-[26px] w-[73px]" />
              <Field value="0.0" className="absolute left-[144px] top-[619px] h-[26px] w-[54px]" />
              <Field value="0" className="absolute left-[144px] top-[644px] h-[25px] w-[54px]" />
            </>
          )}
          <div className={`absolute top-[669px] flex flex-col gap-[2px] border border-[#aaa] bg-[#ddd] ${g.out ? (g.rows === 3 ? "left-[101px]" : "left-[123px]") : "left-[81px]"}`}>
            <Field value="0.00000" className="h-[26px] w-[73px]" />
            <Field value="0.00000" className="h-[26px] w-[73px]" />
            {g.rows === 3 && <Field value="0" className="h-[26px] w-[73px]" />}
          </div>
        </div>
      ))}
    </>
  );
}

function Mimic() {
  const lab = "absolute text-[14px] leading-[16px] whitespace-nowrap";
  return (
    <div className="relative h-[596px] shrink-0 overflow-hidden border-b border-[#666] bg-[#e5e5e5]">
      <div className="absolute -left-[175px] -top-[161px] h-[757px] w-[1920px]">
        {/* sequence table */}
        <div className="absolute left-[344px] top-[171px] w-[1178px] border border-[#888] border-t-[#444]">
          <div className="flex h-[20px] items-center border-b border-[#555] bg-[#999] pl-[8px] text-[14px] font-bold tracking-[0.3px]">
            Sequence - Handler - Diagnosis
          </div>
          <div className="h-[27px] bg-[#dfe6e9]" />
          <div className="h-[27px] bg-[#e9eef0]" />
          <div className="h-[27px] bg-[#dfe6e9]" />
          <div className="h-[27px] bg-[#e9eef0]" />
        </div>
        <div className="absolute left-[931px] top-[192px] h-[108px] w-px bg-[#aaa]" />
        {/* gap / tilt / tension band */}
        <div className="absolute left-[344px] top-[300px] h-[81px] w-[1178px] border border-[#aaa] bg-[#e5e5e5]" />
        <div className="absolute left-[487px] top-[311px] h-[70px] w-[1035px] border border-[#aaa] bg-[#e9eef0]">
          <div className="mt-[39px] h-[29px] bg-[#dfe6e9]" />
        </div>
        <div className="absolute left-[344px] top-[354px] h-px w-[143px] bg-[#aaa]" />
        <div className="absolute left-[1522px] top-[355px] h-[26px] w-[30px] border border-[#aaa] bg-[#dfe6e9]" />
        {/* thickness band */}
        <div className="absolute left-[556px] top-[669px] h-[84px] w-[966px] bg-[#e9eef0]">
          <div className="mt-[29px] h-[28px] bg-[#dfe6e9]" />
        </div>
        <LoadBar className="left-[689px]" />
        <LoadBar className="left-[896px]" />
        <LoadBar className="left-[1103px]" />
        <LoadBar className="left-[1310px]" />
        <LoadBar className="left-[1516px]" />
        <Drawing />
        <GapFields />

        <span className={`${lab} left-[353px] top-[308px] text-[13.6px] font-bold`}>HGC Gap Act.</span>
        <span className={`${lab} left-[460px] top-[308px] font-bold`}>[in]</span>
        <span className={`${lab} left-[426px] top-[333px] font-bold`}>Tilt</span>
        <span className={`${lab} left-[460px] top-[333px] font-bold`}>[in]</span>
        <span className={`${lab} left-[360px] top-[359px] text-[13.7px] font-bold`}>Diff. Tension [ton]</span>
        <Field tone="blue" value="0" className="absolute left-[523px] top-[355px] h-[26px] w-[54px]" />

        <span className={`${lab} left-[509px] top-[410px]`}>Motor Load [%]</span>
        <span className={`${lab} left-[460px] top-[438px]`}>Reduction [%]</span>
        <Field value="0.0" className="absolute left-[550px] top-[434px] h-[26px] w-[54px]" />
        <span className={`${lab} left-[465px] top-[464px] tracking-[0.1px]`}>Side Guide Gap</span>
        <span className={`${lab} left-[585px] top-[464px]`}>[in]</span>

        <fieldset className="absolute left-[195px] top-[385px] h-[99px] w-[141px] border border-[#aaa] text-[14px]">
          <legend className="ml-[6px] px-[4px] leading-[16px] font-bold">TR Speed [fpm]</legend>
          <div className="mt-[12px] flex items-center justify-between pl-[11px] pr-[9px]">
            TTR
            <Field value="0" className="h-[26px] w-[54px]" />
          </div>
          <div className="mt-[9px] flex items-center justify-between pl-[11px] pr-[9px]">
            CTR
            <Field value="0" className="h-[26px] w-[54px]" />
          </div>
        </fieldset>
        <span className={`${lab} left-[195px] top-[497px]`}>Position</span>
        <span className={`${lab} left-[247px] top-[497px]`}>[deg]</span>
        <Field value="0" className="absolute left-[282px] top-[493px] h-[26px] w-[54px]" />
        <Field value="0" className="absolute left-[386px] top-[493px] h-[26px] w-[54px]" />
        <span className={`${lab} left-[397px] top-[518px]`}>[fpm]</span>
        <span className={`${lab} left-[375px] top-[599px]`}>TTR</span>
        <div className={`absolute left-[380px] top-[616px] flex h-[21px] w-[16px] items-center justify-center border border-black text-[16px] font-bold text-[#f5ee10] ${dither}`}>1</div>
        <div className={`absolute left-[200px] top-[658px] flex h-[21px] w-[16px] items-center justify-center border border-black text-[16px] font-bold text-[#f5ee10] ${dither}`}>2</div>
        <span className={`${lab} left-[193px] top-[681px]`}>CTR</span>
        <fieldset className="absolute left-[208px] top-[705px] h-[48px] w-[127px] border border-[#aaa] text-[14px]">
          <legend className="ml-[5px] px-[4px] leading-[16px] font-bold">Rotor Rotation</legend>
          <div className="mt-[6px] flex items-center pl-[7px]">
            <span className="mr-[2px]">180°</span>
            <WarnRound />
            <span className="ml-[29px] mr-[2px]">0°</span>
            <WarnRound />
          </div>
        </fieldset>

        <span className={`${lab} left-[421px] top-[598px]`}>Cool. Flow</span>
        <span className={`${lab} left-[494px] top-[598px]`}>[gpm]</span>
        <Field value="0.0" className="absolute left-[532px] top-[594px] h-[26px] w-[73px]" />
        <span className={`${lab} left-[466px] top-[623px]`}>Slip Fwd.</span>
        <span className={`${lab} left-[528px] top-[623px]`}>[%]</span>
        <Field value="0.0" className="absolute left-[551px] top-[619px] h-[26px] w-[54px]" />
        <span className={`${lab} left-[458px] top-[648px]`}>Speed</span>
        <span className={`${lab} left-[517px] top-[648px]`}>[fpm]</span>
        <Field value="0" className="absolute left-[551px] top-[644px] h-[25px] w-[54px]" />

        <div className="absolute left-[344px] top-[669px] flex h-[84px] w-[191px] border border-[#aaa] text-[14px] leading-[16px]">
          <div className="relative flex-1 border-r border-[#aaa] font-bold">
            <span className="absolute left-[4px] top-[4px]">
              Thick. <span className="text-[#0a50b4]">Ref.</span>
            </span>
            <span className="absolute right-[2px] top-[4px] font-normal text-[#4a4ab4]">[in]</span>
            <span className="absolute right-[40px] top-[33px]">Act.</span>
            <span className="absolute right-[2px] top-[33px] font-normal">[in]</span>
            <span className="absolute left-[13px] top-[61px]">Deviation</span>
            <span className="absolute right-[2px] top-[61px] font-normal">[in]</span>
          </div>
          <div className="flex w-[73px] flex-col gap-[3px]">
            <Field value="0.00000" className="h-[26px]" />
            <Field value="0.00000" className="h-[26px]" />
            <Field value="0" className="h-[25px]" />
          </div>
        </div>
        <span className={`${lab} left-[571px] top-[669px] bg-[#e5e5e5] px-[2px] text-[12.5px] leading-[14px] [word-spacing:-2px]`}>+4 %</span>
        <span className={`${lab} left-[566px] top-[703px]`}>0</span>
        <span className={`${lab} left-[574px] top-[740px] bg-[#e5e5e5] px-[2px] text-[12.5px] leading-[13px] [word-spacing:-2px]`}>-4 %</span>
        <span className={`${lab} left-[1637px] top-[669px] text-[12.5px] leading-[14px] [word-spacing:-2px]`}>+4 %</span>
        <span className={`${lab} left-[1629px] top-[703px]`}>0</span>
        <span className={`${lab} left-[1637px] top-[740px] text-[12.5px] leading-[13px] [word-spacing:-2px]`}>-4 %</span>

        {/* speed gauge */}
        <fieldset className="absolute left-[1540px] top-[171px] h-[89px] w-[366px] border border-[#aaa]">
          <legend className="ml-[5px] px-[4px] text-[14px] leading-[16px] font-bold">Speed [fpm]</legend>
        </fieldset>
        <div className="absolute left-[1568px] top-[196px] h-[25px] w-[241px] border border-b-0 border-[#888] bg-[#ccc]" />
        <div className="absolute left-[1817px] top-[183px] grid w-[79px] grid-cols-[25px_54px] text-right text-[13.8px] leading-[14px]">
          <span>Max</span>
          <b>0.0</b>
          <span>Set</span>
          <b className="text-[#0a50b4]">0.0</b>
          <span>Act</span>
          <b>0.0</b>
        </div>
        <div className="absolute left-[1556px] top-[236px] flex text-right text-[14px] leading-[16px]">
          <span className="w-[10px]">0</span>
          <span className="w-[59px]">1230</span>
          <span className="w-[60px]">2461</span>
          <span className="w-[60px]">3691</span>
          <span className="w-[60px]">4921</span>
        </div>

        {/* camera placeholder */}
        <div className="absolute left-[1647px] top-[270px] flex h-[240px] w-[261px] items-center justify-center bg-linear-to-br from-[#f4f4f4] via-[#e3e3e3] to-[#cfcfcf] pb-[3px] pr-[2px]">
          <svg viewBox="0 0 48 48" className="h-[48px] w-[48px] bg-[#f2f2f8]">
            <path d="M22 0h3v9h-3z" fill="#ccc" />
            <circle cx="23.500" cy="15" r="6" fill="none" stroke="#d0d0d0" strokeWidth="3" />
            <path d="M22 18L8 46M25 18L38 46" stroke="#cfcfcf" strokeWidth="3" />
            <path d="M12 29h24M23.500 25v8" stroke="#cfcfcf" strokeWidth="2.500" />
          </svg>
        </div>
        <Field value="0" className="absolute left-[1800px] top-[681px] h-[26px] w-[54px]" />
        <Field value="0" className="absolute left-[1861px] top-[681px] h-[26px] w-[54px]" />
        <span className={`${lab} left-[1855px] top-[708px]`}>[fpm]</span>

        <TimerDialog />
      </div>
    </div>
  );
}

/* ---------- timer window ---------- */

function Box({ on = false, dim = false }: { on?: boolean; dim?: boolean }) {
  return (
    <span className={`flex size-[13px] shrink-0 items-center justify-center border bg-white ${dim ? "border-[#ccc]" : "border-[#333]"}`}>
      {on && (
        <svg viewBox="0 0 11 11" className="size-[11px]">
          <path d="M1.500 5.500L4.200 8.200L9.500 2.500" fill="none" stroke="#222" strokeWidth="1.200" />
        </svg>
      )}
    </span>
  );
}

function DialogButton({ children, className }: { children: string; className: string }) {
  return <button className={`flex items-center justify-center border ${className}`}>{children}</button>;
}

function TimerDialog() {
  const grey = "border-[#adadad] bg-[#e1e1e1]";
  const input = "flex items-center border border-[#7a7a7a] bg-white pl-[2px]";
  return (
    <div className="absolute left-[985px] top-[246px] flex h-[354px] w-[387px] flex-col bg-[#f0f0f0] text-[11px] leading-[13px] tracking-[-0.3px] shadow-[0_2px_10px_2px_rgba(0,0,0,0.4)]">
      <div className="flex h-[30px] shrink-0 items-center justify-between bg-white pl-[8px] pr-px font-['Open_Sans',sans-serif] text-[12px] tracking-[-0.05px] text-[#999]">
        WinCC Timer
        <span className="mt-[3px] flex h-[19px] w-[19px] items-center justify-center bg-[#e4e4e4] text-[9px] font-bold text-white">x</span>
      </div>
      <div className="flex pl-[12px] pt-[10px]">
        <div className="w-[280px]">
          <div className="flex pl-px pt-px">
            <DialogButton className={`h-[21px] w-[76px] pr-[2px] ${grey}`}>Time!</DialogButton>
            <div className={`${input} ml-[7px] mt-px h-[20px] w-[196px]`}>SDI_CSPM_1-1033.sql</div>
          </div>
          <div className="mt-[8px] flex">
            <div className={`${input} h-[20px] w-[26px] !bg-[#f0f0f0]`}>4.5</div>
            <div className={`${input} ml-[6px] h-[20px] w-[20px]`}>10</div>
            <div className={`${input} ml-[6px] h-[20px] w-[20px] !bg-[#f0f0f0]`}>27</div>
            <div className={`${input} ml-[6px] h-[20px] w-[196px]`}>Measurements</div>
          </div>
          <div className="mt-[10px] h-[145px] w-[280px] border border-[#828790] pl-[9px] pt-px">
            {["General", "Tunnel Furnace", "Roughing Mill", "Finishing Mill", "Laminar Cooling", "Down Coiler", "Coil Conveyor", "System"].map((n) => (
              <div key={n} className="flex h-[16px] items-center">
                <svg viewBox="0 0 14 16" className="h-[16px] w-[14px]">
                  <path d="M4.500 0v16M9 8.500h5" stroke="#888" strokeDasharray="1 1" />
                  <rect x="0.500" y="4.500" width="8" height="8" fill="#fff" stroke="#919191" />
                  <path d="M2.500 8.500h4M4.500 6.500v4" stroke="#2a4a90" />
                </svg>
                <Box on />
                <span className="ml-[2px]">{n}</span>
              </div>
            ))}
          </div>
        </div>
        <div className="ml-[7px] flex w-[74px] flex-col">
          <svg viewBox="0 0 74 24" className="h-[24px] w-[74px]">
            <path d="M36 9 L52 6a5 5 0 0 1 0 11 L36 17z" fill="#fff" />
            <circle cx="30" cy="11.500" r="11.600" fill="#838383" />
          </svg>
          <DialogButton className={`mt-[6px] h-[21px] w-[73px] text-[12px] font-bold ${grey}`}>σ</DialogButton>
          <DialogButton className={`mt-[10px] h-[31px] w-[73px] pr-[2px] ${grey}`}>Screenshots</DialogButton>
          <DialogButton className="mt-[8px] h-[34px] w-[73px] border-[#0078d7] bg-[#e5f1fb] pr-[2px]">Scrape</DialogButton>
          <DialogButton className={`mt-[8px] h-[33px] w-[72px] pr-[2px] ${grey}`}>Filelist</DialogButton>
          <DialogButton className={`ml-px mt-[9px] h-[21px] w-[73px] pr-[2px] ${grey}`}>Mainscreen</DialogButton>
        </div>
      </div>
      <div className="mt-[13px] flex pl-[11px]">
        <div className="flex h-[82px] w-[186px] flex-col border border-[#828790] bg-[#f0f0f0] p-px">
          <div className="flex h-[62px]">
            <div className="w-[166px] overflow-hidden bg-white/60 pl-[2px] pt-px whitespace-nowrap">
              Opening... C:\Project\SDIB_TCM\
              <br />
              @SMS_FlyoutButton
              <br />
              @SMS_FlyoutButton,494,5
              <br />
              Opening... C:\Project\SDIB_TCM\
              <br />
              @SMS_FlyoutButton4
            </div>
            <svg viewBox="0 0 16 62" className="h-[62px] w-[16px]">
              <path d="M4.500 12L8 8L11.500 12M4.500 51L8 55L11.500 51" fill="none" stroke="#444" strokeWidth="1.700" />
              <rect x="1" y="17" width="15" height="17" fill="#cdcdcd" />
            </svg>
          </div>
          <svg viewBox="0 0 182 16" className="h-[16px] w-[182px]">
            <path d="M10.500 4L6.500 8L10.500 12M155 4L159 8L155 12" fill="none" stroke="#444" strokeWidth="1.700" />
            <rect x="17" y="0" width="32" height="15" fill="#cdcdcd" />
          </svg>
        </div>
        <div className="ml-[15px] flex w-[94px] flex-col gap-[10px] pt-px">
          <span className="flex items-center gap-[6px]"><Box />Popups</span>
          <span className="flex items-center gap-[6px]"><Box />Dropdowns</span>
          <span className="flex items-center gap-[6px]"><Box on />Embeddeds</span>
        </div>
        <div className="flex flex-col gap-[9px] pt-px">
          <span className="flex items-center gap-[6px]"><Box />Snap</span>
          <span className="flex items-center gap-[6px]"><Box />Screen</span>
          <span className="flex items-center gap-[6px]"><Box />Expand</span>
          <span className="flex items-center gap-[6px] text-[#a0a0a0]"><Box dim />Select</span>
        </div>
      </div>
    </div>
  );
}

/* ---------- numeric displays ---------- */

const displays = [
  { n: 1, title: "Thickness Dev. XS", unit: "[in]", a: "0.00", b: "" },
  { n: 2, title: "Tension ES abs.", unit: "[ton]", a: "0.0", b: "0.0" },
  { n: 3, title: "Tension ES spec.", unit: "[kpsi]", a: "0.0", b: "0.0" },
  { n: 4, title: "Roll Force", unit: "[ton]", a: "0.0", b: "" },
  { n: 5, title: "Speed MDC", unit: "[fpm]", a: "0.0", b: "0.0" },
];

function Displays() {
  return (
    <div className="flex min-h-0 flex-1 bg-[#d9d9d9]">
      <div className="flex w-[1715px] gap-[10.3px] pl-[20px] pt-[11px]">
        {displays.map((d) => (
          <fieldset key={d.n} className="h-[240px] w-[329px] shrink-0 border border-[#aaa]">
            <legend className="ml-[5px] px-[3px] text-[14px] leading-[16px] font-bold tracking-[-0.1px]">Display {d.n}:</legend>
            <div className="flex h-[33px] items-center justify-between pl-[10px] pr-[3px] text-[23.8px] leading-none font-bold">
              <span>{d.title}</span>
              <span>{d.unit}</span>
            </div>
            <div className="-mt-[4px] flex h-[95px] items-center justify-end pr-[4px] text-[104px] leading-none font-bold">{d.a}</div>
            {d.b && (
              <div className="mt-px flex h-[95px] items-center justify-end pr-[4px] text-[104px] leading-none font-bold text-[#0055b8]">{d.b}</div>
            )}
          </fieldset>
        ))}
      </div>
      <div className="flex w-[30px] flex-col text-[14px]">
        {["Graphic", "Numeric", "Cond.", "Status"].map((t) => (
          <div
            key={t}
            className={`flex h-[63.500px] w-[30px] shrink-0 items-center justify-center pr-[2px] [writing-mode:vertical-rl] ${
              t === "Numeric" ? "font-bold" : "border-b border-l border-t border-[#333] border-t-[#eee] bg-linear-to-r from-[#e8e8e8] to-[#b8b8b8] font-normal tracking-[0.5px]"
            }`}
          >
            {t}
          </div>
        ))}
      </div>
    </div>
  );
}

/* ---------- footer ---------- */

const softKeys = [
  ["Overview", "Track. Corection"],
  ["Overview", "POR"],
  ["Overview", "Tension Reel"],
  ["Setup Data"],
  ["Flatness", "Control C1"],
  ["Flatness", "Control C5"],
  ["Cooling and", "Lubr. C1 - C4"],
  ["Cooling and", "Lubr. C5"],
  ["Stand C1", "Roll Change"],
];

function Footer() {
  const tool = "flex h-full flex-1 items-center justify-center border-l-2 border-black shadow-[inset_1px_1px_0_#777]";
  return (
    <div className="flex h-[40px] border-b border-t border-black bg-linear-to-b from-[#606060] to-[#333] text-white">
      <div className="flex w-[378px] border-r border-black pt-px text-[17.8px]">
        <div className="flex w-[129px] items-center justify-center bg-linear-to-b from-[#777] to-[#4c4c4c]">Tr. Entry</div>
        <div className="flex w-[124px] items-center justify-center border-x border-[#222] bg-linear-to-b from-[#4c4c4c] to-[#777] pr-[2px] shadow-[inset_-1px_-1px_0_#999]">TCM</div>
        <div className="flex flex-1 items-center justify-center bg-linear-to-b from-[#777] to-[#4c4c4c]">Tr. Exit</div>
      </div>
      <div className="ml-[2px] flex w-[1153px] border-l border-black text-center text-[15.500px] leading-[17.500px]">
        {softKeys.map((k) => (
          <div key={k.join()} className="flex flex-1 flex-col justify-center border-r border-black whitespace-nowrap pr-[2px] shadow-[inset_1px_1px_0_#6c6c6c]">
            {k.map((l) => (
              <span key={l}>{l}</span>
            ))}
          </div>
        ))}
      </div>
      <div className="w-[151px]" />
      <div className="flex flex-1">
        <div className={tool}>
          <svg viewBox="0 0 32 24" className="h-[24px] w-[32px]">
            <path d="M0 1h26v17H0z" fill="#fff" />
            <path d="M2.500 3.500h21v12h-21z" fill="#444" />
            <path d="M4 4.500h8.500v4.500H4zM14 4.500h8.500v4.500H14zM4 10.500h8.500v4.500H4zM14 10.500h8.500v4.500H14z" fill="#fff" />
            <path d="M10 18h6v3h4v2H6v-2h4zM26.500 15.500l2.700-4 2.700 4z" fill="#fff" />
          </svg>
        </div>
        <div className={tool}>
          <svg viewBox="0 0 34 30" className="h-[30px] w-[34px]">
            <path d="M1 2h25v18H1z" fill="#fff" />
            <path d="M3 4h21v14H3z" fill="#bbb" />
            <path d="M10 20h6v3h4v2H6v-2h4zM28.500 16.500l2.700-4 2.700 4z" fill="#fff" />
            <path d="M22.500 19v10M22.500 24.500h3M22.500 27.500h3" stroke="#fff" strokeWidth="1.600" />
            <circle cx="22.500" cy="16" r="3.600" fill="#777" stroke="#222" strokeWidth="3" />
            <circle cx="22.500" cy="16" r="3.600" fill="none" stroke="#fff" strokeWidth="1.500" />
          </svg>
        </div>
        <div className={tool}>
          <FaCamera className="size-[24px]" />
        </div>
        <div className={tool}>
          <svg viewBox="0 0 26 26" className="h-[26px] w-[26px]">
            <path d="M18 5H2.500v18.500h18V12" fill="none" stroke="#fff" strokeWidth="3" />
            <path d="M6 12.500l5 6L24 2" fill="none" stroke="#fff" strokeWidth="3.600" />
          </svg>
        </div>
      </div>
    </div>
  );
}

export default function App() {
  return (
    <div className="flex h-[1080px] w-[1920px] flex-col overflow-hidden bg-[#e5e5e5] font-['Liberation_Sans',Arial,sans-serif] text-black">
      <MenuBar />
      <Header />
      <Breadcrumb />
      <div className="flex h-[848px]">
        <Sidebar />
        <div className="flex flex-1 flex-col">
          <Mimic />
          <Displays />
        </div>
      </div>
      <div className="flex h-[31px] border-t-2 border-black bg-[#e5e5e5] p-px">
        <div className="relative flex w-[60px] items-center justify-center">
          <svg viewBox="0 0 14 20" className="h-[18px] w-[14px]">
            <path d="M9.500 0 L0.500 11 L6 10.200 L3 20 L13.500 8 L7.800 8.800 L13 0.500 Z" />
          </svg>
          <Corner />
        </div>
        <div className="flex flex-1 items-center justify-center border border-[#7c7c5c] bg-white pr-[2px] text-[18.800px] leading-none">
          No connection to data server!
        </div>
      </div>
      <Footer />
    </div>
  );
}
